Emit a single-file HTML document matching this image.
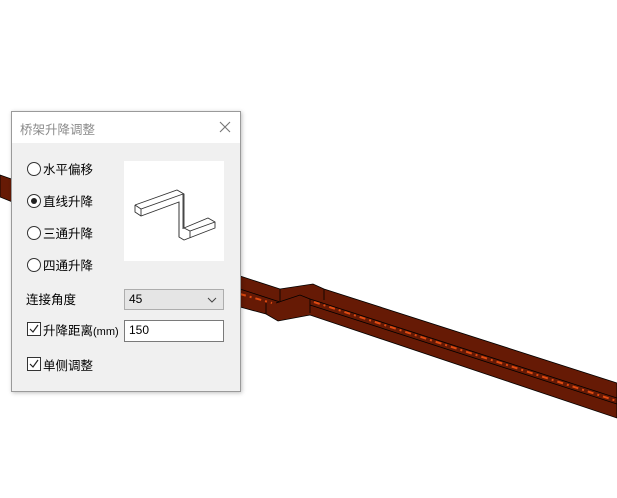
<!DOCTYPE html>
<html><head><meta charset="utf-8"><style>
body{margin:0;width:617px;height:498px;background:#fff;position:relative;overflow:hidden;font-family:"Liberation Sans","Noto Sans CJK SC",sans-serif;}
.dlg{position:absolute;left:11px;top:111px;width:228px;height:279px;background:#f0f0f0;border:1px solid #9a9a9a;box-shadow:1px 1px 4px rgba(0,0,0,.25)}
.tb{height:31px;background:#fff;position:relative}
.tb span{position:absolute;left:8px;top:7px;font-size:12.5px;color:#8a8a8a}
.t{position:absolute;font-size:12.5px;color:#000}
.rad{position:absolute;width:12px;height:12px;border:1px solid #333;border-radius:50%;background:#fff}
.rad.on::after{content:"";position:absolute;left:3px;top:3px;width:6px;height:6px;border-radius:50%;background:#222}
.cb{position:absolute;width:12px;height:12px;border:1px solid #333;background:#fff}
</style></head><body>
<svg width="617" height="498" style="position:absolute;left:0;top:0">
<polygon points="0,175 20,182 20,205 0,197" fill="#661a05" stroke="#000" stroke-width="0.8"/>
<polygon points="240,276 280,289 313,284 324,289 617,383 617,418 310,315 278,321 266,314 240,307" fill="#661a05" stroke="#000" stroke-width="0.8"/>
<line x1="240" y1="289" x2="280" y2="302" stroke="#000" stroke-width="0.8"/>
<line x1="310" y1="299" x2="617" y2="398" stroke="#000" stroke-width="0.8"/>
<line x1="310" y1="305" x2="617" y2="404" stroke="#000" stroke-width="0.8"/>
<line x1="314" y1="302" x2="617" y2="401" stroke="#e04a10" stroke-width="2" stroke-dasharray="6,4,2,4"/>
<line x1="240" y1="294" x2="272" y2="303" stroke="#e04a10" stroke-width="2" stroke-dasharray="6,4,2,4"/>
<line x1="280" y1="289" x2="280" y2="301" stroke="#000" stroke-width="0.8"/>
<line x1="324" y1="289" x2="324" y2="300" stroke="#000" stroke-width="0.8"/>
<line x1="266" y1="303" x2="266" y2="314" stroke="#000" stroke-width="0.8"/>
<line x1="310" y1="299" x2="310" y2="313" stroke="#000" stroke-width="0.8"/>
<polyline points="276,303 300,295 310,299" fill="none" stroke="#000" stroke-width="0.8"/>
</svg>
<div class="dlg">
<div class="tb"><span>桥架升降调整</span>
<svg width="12" height="12" style="position:absolute;left:207px;top:9px"><path d="M1 1L11 11M11 1L1 11" stroke="#777" stroke-width="1.1"/></svg></div>
<div class="rad" style="left:15px;top:50px"></div><div class="t" style="left:31px;top:47px">水平偏移</div>
<div class="rad on" style="left:15px;top:82px"></div><div class="t" style="left:31px;top:79px">直线升降</div>
<div class="rad" style="left:15px;top:114px"></div><div class="t" style="left:31px;top:111px">三通升降</div>
<div class="rad" style="left:15px;top:146px"></div><div class="t" style="left:31px;top:143px">四通升降</div>
<div style="position:absolute;left:112px;top:49px;width:100px;height:100px;background:#fff">
<svg width="100" height="100"><g fill="none" stroke="#333" stroke-width="0.9">
<polyline points="11,44 53,29 60,33 60,67 84,57 91,61 91,67 60,79 55,76 55,41 17,55 11,51 11,44"/>
<polyline points="11,44 17,48 59,33"/><line x1="17" y1="48" x2="17" y2="55"/>
<line x1="59" y1="33" x2="59" y2="68"/><line x1="55" y1="41" x2="55" y2="76"/>
<polyline points="60,67 66,70 91,61"/><line x1="66" y1="70" x2="66" y2="77"/>
</g></svg></div>
<div class="t" style="left:14px;top:177px">连接角度</div>
<div style="position:absolute;left:112px;top:177px;width:98px;height:19px;background:#e5e5e5;border:1px solid #adadad;font-size:12px;line-height:19px;text-indent:4px">45
<svg width="10" height="6" style="position:absolute;right:6px;top:7px"><path d="M1 1L5 5L9 1" fill="none" stroke="#444"/></svg></div>
<div class="cb" style="left:15px;top:210px"><svg width="12" height="12" style="position:absolute;left:0;top:0"><path d="M2 6L5 9L10 2" fill="none" stroke="#222" stroke-width="1.2"/></svg></div>
<div class="t" style="left:31px;top:208px">升降距离<span style="font-size:11px">(mm)</span></div>
<div style="position:absolute;left:112px;top:208px;width:98px;height:20px;background:#fff;border:1px solid #7a7a7a;font-size:12px;line-height:19px;text-indent:4px">150</div>
<div class="cb" style="left:15px;top:245px"><svg width="12" height="12" style="position:absolute;left:0;top:0"><path d="M2 6L5 9L10 2" fill="none" stroke="#222" stroke-width="1.2"/></svg></div>
<div class="t" style="left:31px;top:243px">单侧调整</div>
</div>
</body></html>
